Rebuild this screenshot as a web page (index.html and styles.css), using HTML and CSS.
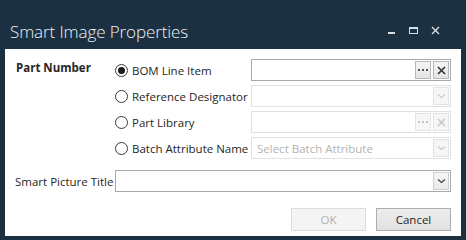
FILE: index.html
```html
<!DOCTYPE html>
<html>
<head>
<meta charset="utf-8">
<link rel="stylesheet" href="styles.css">
</head>
<body>
<div class="window">
  <div class="titlebar">
    <div class="title">Smart Image Properties</div>
    <div class="winbtns">
      <span class="wb"><svg width="11" height="11" viewBox="0 0 11 11"><rect x="2" y="6" width="7" height="2" fill="#d9dee2"/></svg></span>
      <span class="wb"><svg width="11" height="11" viewBox="0 0 11 11"><rect x="1.5" y="1.5" width="8" height="6" fill="none" stroke="#d9dee2" stroke-width="1"/><rect x="1" y="1" width="9" height="2" fill="#d9dee2"/></svg></span>
      <span class="wb"><svg width="11" height="11" viewBox="0 0 11 11"><path d="M2 1 L9 8 M9 1 L2 8" stroke="#d9dee2" stroke-width="1.4"/></svg></span>
    </div>
  </div>
  <div class="panel">
    <div class="partsec">
      <div class="seclabel">Part Number</div>
      <div class="opts">
        <label class="radio"><span class="dot on"></span>BOM Line Item</label>
        <div class="field">
          <span class="fill"></span>
          <span class="btn"><svg width="10" height="4" viewBox="0 0 10 4"><rect x="0" y="1" width="2" height="2" fill="#555"/><rect x="4" y="1" width="2" height="2" fill="#555"/><rect x="8" y="1" width="2" height="2" fill="#555"/></svg></span>
          <span class="btn"><svg width="9" height="9" viewBox="0 0 9 9"><path d="M1 1 L8 8 M8 1 L1 8" stroke="#333" stroke-width="1.6"/></svg></span>
        </div>

        <label class="radio"><span class="dot"></span>Reference Designator</label>
        <div class="field dis">
          <span class="fill"></span>
          <span class="btn"><svg width="9" height="6" viewBox="0 0 9 6"><path d="M1 1.5 L4.5 4.5 L8 1.5" fill="none" stroke="#c8c8c8" stroke-width="1.2"/></svg></span>
        </div>

        <label class="radio"><span class="dot"></span>Part Library</label>
        <div class="field dis">
          <span class="fill"></span>
          <span class="btn"><svg width="10" height="4" viewBox="0 0 10 4"><rect x="0" y="1" width="2" height="2" fill="#c4c4c4"/><rect x="4" y="1" width="2" height="2" fill="#c4c4c4"/><rect x="8" y="1" width="2" height="2" fill="#c4c4c4"/></svg></span>
          <span class="btn"><svg width="9" height="9" viewBox="0 0 9 9"><path d="M1 1 L8 8 M8 1 L1 8" stroke="#c8c8c8" stroke-width="1.6"/></svg></span>
        </div>

        <label class="radio"><span class="dot"></span>Batch Attribute Name</label>
        <div class="field dis">
          <span class="fill placeholder">Select Batch Attribute</span>
          <span class="btn"><svg width="9" height="6" viewBox="0 0 9 6"><path d="M1 1.5 L4.5 4.5 L8 1.5" fill="none" stroke="#c8c8c8" stroke-width="1.2"/></svg></span>
        </div>
      </div>
    </div>

    <div class="titlerow">
      <div class="rowlabel">Smart Picture Title</div>
      <div class="field combo">
        <span class="fill"></span>
        <span class="btn"><svg width="9" height="6" viewBox="0 0 9 6"><path d="M1 1.5 L4.5 4.5 L8 1.5" fill="none" stroke="#444" stroke-width="1.3"/></svg></span>
      </div>
    </div>

    <div class="actions">
      <button class="pbtn disabled">OK</button>
      <button class="pbtn">Cancel</button>
    </div>
  </div>
</div>
</body>
</html>
```

FILE: styles.css
```css
* { box-sizing: border-box; }
html, body {
  margin: 0;
  padding: 0;
  background: #1b3041;
  width: 466px;
  height: 240px;
  overflow: hidden;
}
.window {
  display: flex;
  flex-direction: column;
  height: 240px;
  font-family: "Open Sans", "Noto Sans", sans-serif;
}
.titlebar {
  height: 49px;
  display: flex;
  align-items: flex-start;
  justify-content: space-between;
  padding: 0 0 0 10px;
}
.title {
  color: #eef2f5;
  font-size: 17px;
  font-weight: 300;
  margin-top: 20px;
  letter-spacing: -0.1px;
}
.winbtns {
  display: flex;
  gap: 11px;
  margin-top: 26px;
  margin-right: 25px;
}
.wb { display: block; width: 11px; height: 11px; }
.wb svg { display: block; }

.panel {
  background: #ffffff;
  margin: 0 5px 0 5px;
  height: 187px;
  padding: 10px 10px 0 10px;
  display: flex;
  flex-direction: column;
  color: #262626;
  font-size: 11.5px;
}
.partsec {
  display: flex;
}
.seclabel {
  width: 100px;
  font-weight: 700;
  padding-left: 1px;
  line-height: 18px;
}
.opts {
  display: grid;
  grid-template-columns: 136px 200px;
  grid-auto-rows: 22px;
  row-gap: 4px;
}
.radio {
  display: flex;
  align-items: center;
  gap: 4px;
  white-space: nowrap;
}
.dot {
  width: 13px;
  height: 13px;
  border-radius: 50%;
  border: 1px solid #3a3a3a;
  background: #fff;
  display: flex;
  align-items: center;
  justify-content: center;
  flex: none;
}
.dot.on::after {
  content: "";
  width: 7px;
  height: 7px;
  border-radius: 50%;
  background: #1a1a1a;
}
.field {
  display: flex;
  align-items: stretch;
  border: 1px solid #a9a9a9;
  padding: 1px;
  gap: 2px;
  height: 22px;
}
.field.dis {
  border-color: #e1e1e1;
}
.fill {
  flex: 1;
  display: flex;
  align-items: center;
  padding-left: 4px;
  white-space: nowrap;
}
.placeholder { color: #b3b3b3; }
.btn {
  width: 16px;
  display: flex;
  align-items: center;
  justify-content: center;
  border: 1px solid #b8b8b8;
  background: linear-gradient(#f4f4f4, #e4e4e4);
}
.field.dis .btn {
  border-color: #e3e3e3;
  background: #f6f6f6;
}
.combo .btn {
  border-color: #cfcfcf;
  background: linear-gradient(#f6f6f6, #eaeaea);
}
.btn svg { display: block; }

.titlerow {
  display: flex;
  align-items: center;
  margin-top: 11px;
}
.rowlabel {
  width: 100px;
  white-space: nowrap;
}
.combo { flex: 1; }

.actions {
  display: flex;
  justify-content: flex-end;
  gap: 10px;
  margin-top: 16px;
}
.pbtn {
  width: 75px;
  height: 23px;
  font-family: "Open Sans", "Noto Sans", sans-serif;
  font-size: 11.5px;
  color: #1e1e1e;
  background: linear-gradient(#ececec, #e2e2e2);
  border: 1px solid #adadad;
  padding: 0;
}
.pbtn.disabled {
  color: #b0b0b0;
  background: #f4f4f4;
  border-color: #dcdcdc;
}
```
